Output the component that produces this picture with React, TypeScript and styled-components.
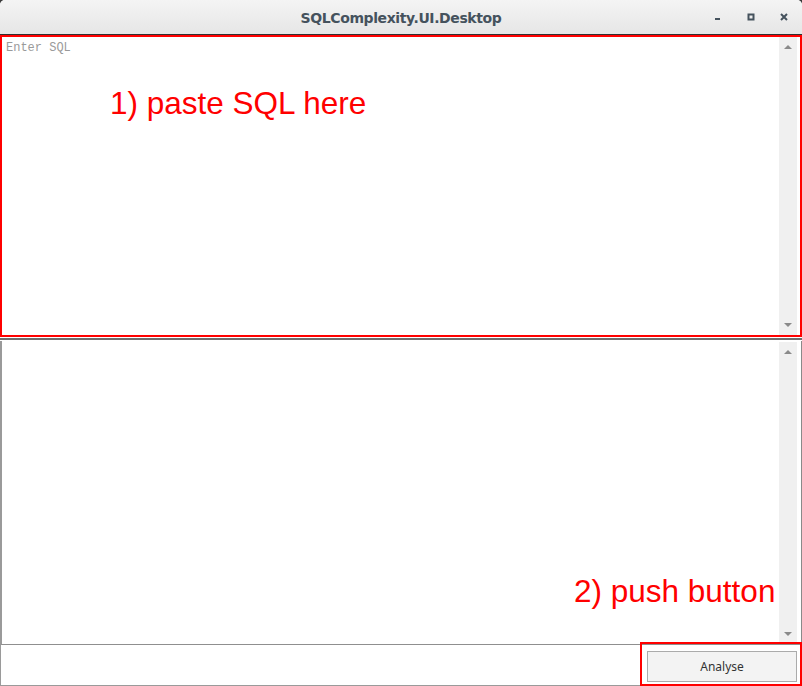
import React from "react";
import styled, { createGlobalStyle } from "styled-components";

const Global = createGlobalStyle`
  html, body { margin: 0; padding: 0; background: #3a3a3a; }
  body { width: 802px; height: 686px; overflow: hidden; }
  * { box-sizing: border-box; }
`;

const Window = styled.div`
  width: 802px;
  height: 686px;
  display: flex;
  flex-direction: column;
  background: #ffffff;
  border-radius: 5px 5px 0 0;
  overflow: hidden;
  font-family: "Noto Sans", "DejaVu Sans", sans-serif;
`;

const TitleBar = styled.div`
  height: 35px;
  flex: none;
  display: flex;
  align-items: center;
  justify-content: center;
  position: relative;
  background: linear-gradient(#f4f4f4, #e6e6e6);
  border-bottom: 1px solid #2f2f2f;
`;

const Title = styled.div`
  font-family: "DejaVu Sans", sans-serif;
  font-weight: bold;
  font-size: 14px;
  color: #45525d;
  letter-spacing: -0.4px;
  margin-top: 1px;
`;

const Controls = styled.div`
  position: absolute;
  right: 2px;
  top: 0;
  height: 34px;
  display: flex;
  align-items: center;
`;

const CtrlButton = styled.div`
  width: 33px;
  height: 34px;
  display: flex;
  align-items: center;
  justify-content: center;
`;

const Body = styled.div`
  flex: 1;
  display: flex;
  flex-direction: column;
  position: relative;
`;

const InputPane = styled.div`
  height: 302px;
  flex: none;
  display: flex;
  border: 2px solid #ff0000;
  position: relative;
`;

const Editor = styled.textarea`
  flex: 1;
  border: none;
  outline: none;
  resize: none;
  margin: 0;
  padding: 4px 4px;
  font-family: "Liberation Mono", "DejaVu Sans Mono", monospace;
  font-size: 12px;
  line-height: 14px;
  color: #222;
  background: #fff;
  overflow: hidden;
  &::placeholder { color: #9a9a9a; }
`;

const ScrollBar = styled.div`
  width: 18px;
  flex: none;
  background: #f0f0f0;
  display: flex;
  flex-direction: column;
  justify-content: space-between;
  align-items: center;
  padding: 8px 0 8px;
`;

const Arrow = styled.div<{ $up?: boolean }>`
  width: 0;
  height: 0;
  border-left: 4px solid transparent;
  border-right: 4px solid transparent;
  ${(p) =>
    p.$up
      ? "border-bottom: 4px solid #8a8a8a;"
      : "border-top: 4px solid #8a8a8a;"}
`;

const RightGap = styled.div<{ $w: number }>`
  width: ${(p) => p.$w}px;
  flex: none;
  background: #fff;
`;

const Splitter = styled.div`
  height: 4px;
  flex: none;
  border-top: 1px solid #ffffff;
  background: #6e6e6e;
  border-bottom: 1px solid #ffffff;
`;

const OutputPane = styled.div`
  flex: 1;
  display: flex;
  border-left: 2px solid #9a9a9a;
  border-right: 1px solid #8a8a8a;
  border-bottom: 1px solid #8f8f8f;
  padding-top: 1px;
`;

const Output = styled.div`
  flex: 1;
  background: #fff;
`;

const BottomBar = styled.div`
  height: 41px;
  flex: none;
  display: flex;
  justify-content: flex-end;
  border-left: 1px solid #9a9a9a;
  border-bottom: 1px solid #9a9a9a;
`;

const ButtonFrame = styled.div`
  width: 162px;
  height: 44px;
  margin-top: -3px;
  border: 2px solid #ff0000;
  padding: 7px 3px 3px 5px;
  display: flex;
`;

const Button = styled.button`
  flex: 1;
  height: 31px;
  background: #f3f3f3;
  border: 1px solid #ababab;
  font-family: "Noto Sans", "Open Sans", sans-serif;
  font-size: 12px;
  color: #333;
  padding: 0;
  margin: 0;
`;

const Note = styled.div<{ $x: number; $y: number }>`
  position: absolute;
  left: ${(p) => p.$x}px;
  top: ${(p) => p.$y}px;
  font-family: "Liberation Sans", Arial, sans-serif;
  font-size: 31.5px;
  color: #ff0000;
  white-space: nowrap;
  pointer-events: none;
`;

export default function App() {
  return (
    <>
      <Global />
      <Window>
        <TitleBar>
          <Title>SQLComplexity.UI.Desktop</Title>
          <Controls>
            <CtrlButton>
              <svg width="8" height="8" viewBox="0 0 8 8">
                <rect x="1" y="5" width="5" height="2" fill="#45525d" />
              </svg>
            </CtrlButton>
            <CtrlButton>
              <svg width="8" height="8" viewBox="0 0 8 8">
                <rect x="1.5" y="1.5" width="5" height="5" fill="none" stroke="#45525d" strokeWidth="2" />
              </svg>
            </CtrlButton>
            <CtrlButton>
              <svg width="8" height="8" viewBox="0 0 8 8">
                <path d="M1 1 L7 7 M7 1 L1 7" stroke="#45525d" strokeWidth="2" />
              </svg>
            </CtrlButton>
          </Controls>
        </TitleBar>
        <Body>
          <InputPane>
            <Editor placeholder="Enter SQL" spellCheck={false} />
            <ScrollBar>
              <Arrow $up />
              <Arrow />
            </ScrollBar>
            <RightGap $w={3} />
            <Note $x={108} $y={48}>1) paste SQL here</Note>
          </InputPane>
          <Splitter />
          <OutputPane>
            <Output />
            <ScrollBar>
              <Arrow $up />
              <Arrow />
            </ScrollBar>
            <RightGap $w={4} />
          </OutputPane>
          <Note $x={574} $y={538}>2) push button</Note>
          <BottomBar>
            <ButtonFrame>
              <Button>Analyse</Button>
            </ButtonFrame>
          </BottomBar>
        </Body>
      </Window>
    </>
  );
}
